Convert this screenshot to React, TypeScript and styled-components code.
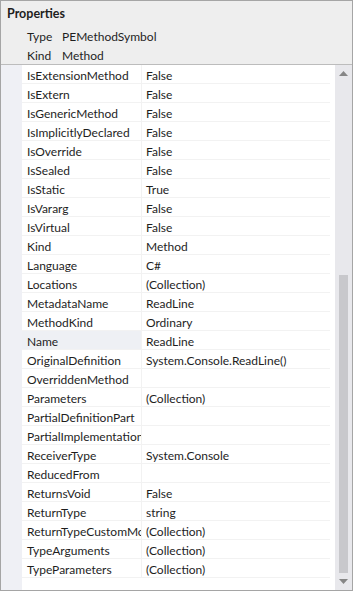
import React from "react";
import { createGlobalStyle, styled } from "styled-components";

const GlobalCss = createGlobalStyle`
  html, body {
    margin: 0;
    padding: 0;
    background: #ffffff;
    font-family: Lato, 'Noto Sans', sans-serif;
  }
`;

const Window = styled.div`
  box-sizing: border-box;
  width: 353px;
  height: 591px;
  border: 1px solid #a5a5a5;
  display: flex;
  flex-direction: column;
  background: #ffffff;
  overflow: hidden;
`;

const Header = styled.div`
  background: #eeeeee;
  border-bottom: 1px solid #bcbcbc;
  padding: 2px 0 0 6px;
  height: 64px;
  box-sizing: border-box;
`;

const Title = styled.div`
  font-size: 12.5px;
  font-weight: 700;
  line-height: 21px;
  margin-bottom: 3px;
  color: #1e1e1e;
`;

const InfoRow = styled.div`
  display: grid;
  grid-template-columns: 35px auto;
  padding-left: 20px;
  font-size: 12px;
  line-height: 19px;
  color: #1e1e1e;
`;

const Body = styled.div`
  flex: 1;
  display: flex;
  min-height: 0;
`;

const Grid = styled.div`
  flex: 1;
  display: flex;
  flex-direction: column;
  background: linear-gradient(to right, #eff0f5 21px, #ffffff 21px);
`;

const Row = styled.div`
  display: grid;
  grid-template-columns: 21px 120px 1fr;
  height: 19px;
  font-size: 12px;
  line-height: 18px;
  color: #1e1e1e;
`;

const NameCell = styled.div<{ $selected?: boolean }>`
  grid-column: 2;
  box-sizing: border-box;
  padding: 2px 0 0 5px;
  white-space: nowrap;
  overflow: hidden;
  background: ${(p) => (p.$selected ? "#eef0f4" : "transparent")};
  border-bottom: 1px solid #f2f2f2;
  border-right: 1px solid #f2f2f2;
`;

const ValueCell = styled.div`
  box-sizing: border-box;
  padding: 2px 0 0 4px;
  white-space: nowrap;
  overflow: hidden;
  border-bottom: 1px solid #f2f2f2;
  margin-right: 5px;
`;

const Scrollbar = styled.div`
  width: 17px;
  background: #e8e8ec;
  display: flex;
  flex-direction: column;
  align-items: center;
`;

const Arrow = styled.div`
  height: 17px;
  width: 17px;
  display: flex;
  align-items: center;
  justify-content: center;
`;

const Track = styled.div`
  flex: 1;
  width: 9px;
  display: flex;
  flex-direction: column;
  justify-content: flex-end;
`;

const Thumb = styled.div`
  background: #c8c8cc;
  width: 9px;
`;

const rows: [string, string][] = [
  ["IsExtensionMethod", "False"],
  ["IsExtern", "False"],
  ["IsGenericMethod", "False"],
  ["IsImplicitlyDeclared", "False"],
  ["IsOverride", "False"],
  ["IsSealed", "False"],
  ["IsStatic", "True"],
  ["IsVararg", "False"],
  ["IsVirtual", "False"],
  ["Kind", "Method"],
  ["Language", "C#"],
  ["Locations", "(Collection)"],
  ["MetadataName", "ReadLine"],
  ["MethodKind", "Ordinary"],
  ["Name", "ReadLine"],
  ["OriginalDefinition", "System.Console.ReadLine()"],
  ["OverriddenMethod", ""],
  ["Parameters", "(Collection)"],
  ["PartialDefinitionPart", ""],
  ["PartialImplementationPart", ""],
  ["ReceiverType", "System.Console"],
  ["ReducedFrom", ""],
  ["ReturnsVoid", "False"],
  ["ReturnType", "string"],
  ["ReturnTypeCustomModifiers", "(Collection)"],
  ["TypeArguments", "(Collection)"],
  ["TypeParameters", "(Collection)"],
];

function Triangle({ up }: { up?: boolean }) {
  return (
    <svg width="9" height="5" viewBox="0 0 9 5">
      <path d={up ? "M0 5 L4.5 0 L9 5 Z" : "M0 0 L4.5 5 L9 0 Z"} fill="#868686" />
    </svg>
  );
}

export default function App() {
  return (
    <Window>
      <GlobalCss />
      <Header>
        <Title>Properties</Title>
        <InfoRow>
          <span>Type</span>
          <span>PEMethodSymbol</span>
        </InfoRow>
        <InfoRow>
          <span>Kind</span>
          <span>Method</span>
        </InfoRow>
      </Header>
      <Body>
        <Grid>
          {rows.map(([name, value]) => (
            <Row key={name}>
              <NameCell $selected={name === "Name"}>{name}</NameCell>
              <ValueCell>{value}</ValueCell>
            </Row>
          ))}
        </Grid>
        <Scrollbar>
          <Arrow>
            <Triangle up />
          </Arrow>
          <Track>
            <Thumb style={{ height: 298 }} />
          </Track>
          <Arrow>
            <Triangle />
          </Arrow>
        </Scrollbar>
      </Body>
    </Window>
  );
}
